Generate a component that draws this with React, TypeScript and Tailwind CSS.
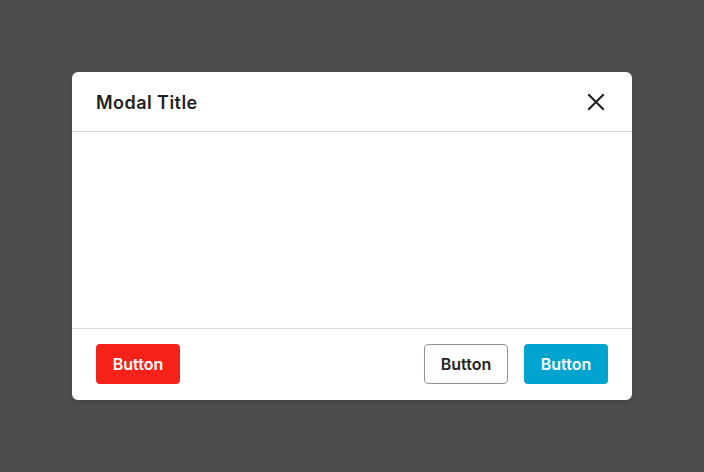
export default function App() {
  return (
    <div className="w-[704px] h-[472px] bg-[#4d4d4d] flex items-start justify-center pt-[72px] font-['Inter',sans-serif]">
      <div className="w-[560px] h-[328px] bg-white rounded-md shadow-md flex flex-col overflow-hidden">
        <div className="h-[60px] border-b border-[#dcdcdc] flex items-center justify-between pl-6 pr-[24px] pt-[1px]">
          <h2 className="text-[18px] font-semibold text-[#1f1f1f] font-['Inter',sans-serif] [font-variation-settings:'opsz'_14] tracking-[0.45px]">Modal Title</h2>
          <svg width="24" height="24" viewBox="0 0 24 24" fill="none" stroke="#1f1f1f" strokeWidth="2.1" strokeLinecap="square">
            <path d="M5 5 L19 19 M19 5 L5 19" />
          </svg>
        </div>
        <div className="flex-1" />
        <div className="h-[72px] border-t border-[#dcdcdc] flex items-center justify-between px-6 pb-[2px]">
          <button className="w-[84px] h-[40px] rounded-[4px] bg-[#f5221a] text-white text-[16px] font-semibold font-['Inter',sans-serif]">Button</button>
          <div className="flex gap-4">
            <button className="w-[84px] h-[40px] rounded-[4px] bg-white border border-[#8f979e] text-[#1f1f1f] text-[16px] font-semibold font-['Inter',sans-serif]">Button</button>
            <button className="w-[84px] h-[40px] rounded-[4px] bg-[#00a5cf] text-white text-[16px] font-semibold font-['Inter',sans-serif]">Button</button>
          </div>
        </div>
      </div>
    </div>
  );
}
